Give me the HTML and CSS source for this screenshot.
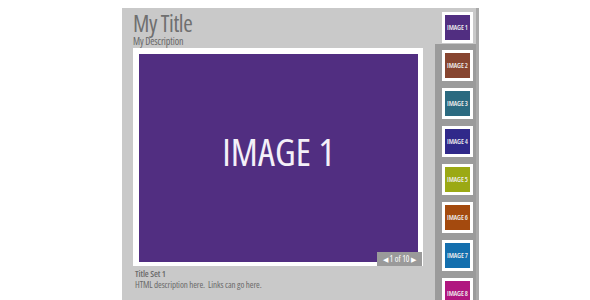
FILE: index.html
```html
<!doctype html>
<html lang="en">
	<head>
		<meta charset="UTF-8">
		<title>Gallery</title>
		<link rel="stylesheet" href="styles.css">
	</head>

	<body>
		<div class="gallery">
			<div class="main">
				<h1>My Title</h1>
				<p class="desc">My Description</p>

				<div class="frame">
					<div class="slide purple">IMAGE 1</div>
					<div class="counter"><span class="arrow">&#9664;</span> 1 of 10 <span class="arrow">&#9654;</span></div>
				</div>

				<div class="caption">
					<h3>Title Set 1</h3>
					<p>HTML description here.&nbsp; Links can go here.</p>
				</div>
			</div>

			<div class="thumbs">
				<div class="current">
					<div class="thumb purple">IMAGE 1</div>
				</div>
				<div class="strip">
					<div class="thumb brown">IMAGE 2</div>
					<div class="thumb teal">IMAGE 3</div>
					<div class="thumb indigo">IMAGE 4</div>
					<div class="thumb olive">IMAGE 5</div>
					<div class="thumb rust">IMAGE 6</div>
					<div class="thumb blue">IMAGE 7</div>
					<div class="thumb magenta">IMAGE 8</div>
				</div>
			</div>
		</div>
	</body>
</html>
```

FILE: styles.css
```css
* {
	padding: 0;
	margin: 0;
	box-sizing: border-box;
}
body {
	background-color: #fff;
	font-family: 'Open Sans', Arial, sans-serif;
	font-stretch: 80%;
	overflow: hidden;
}
.gallery {
	display: flex;
	width: 357px;
	height: 292px;
	margin: 8px 0 0 122px;
	background-color: #c9c9c9;
	border-right: 3px solid #a9a9a9;
}
.main {
	width: 313px;
	padding: 2px 0 0 11px;
}
h1 {
	font-size: 23px;
	font-weight: normal;
	line-height: 26px;
	letter-spacing: -0.4px;
	color: #6f6f6f;
}
.desc {
	font-size: 10px;
	line-height: 10px;
	letter-spacing: -0.1px;
	color: #666;
	margin-bottom: 2px;
}
.frame {
	position: relative;
	width: 290px;
	height: 218px;
	padding: 6px 5px 4px 6px;
	background-color: #fff;
}
.slide {
	display: flex;
	align-items: center;
	justify-content: center;
	width: 279px;
	height: 208px;
	padding-bottom: 14px;
	font-size: 38px;
	letter-spacing: 0.2px;
	color: #f4f0f8;
}
.counter {
	position: absolute;
	right: 1px;
	bottom: 0;
	width: 45px;
	height: 14px;
	background-color: #9a9a9a;
	color: #fff;
	font-size: 8.5px;
	line-height: 14px;
	text-align: center;
}
.arrow {
	font-size: 7px;
}
.caption {
	padding: 3px 0 0 2px;
	color: #6a6a6a;
	font-size: 9px;
	line-height: 11px;
	letter-spacing: -0.1px;
}
.caption h3 {
	font-size: 9px;
	font-weight: 600;
	line-height: 10px;
}
.thumbs {
	width: 41px;
}
.current {
	height: 36px;
	padding: 4px 3px 0 7px;
}
.strip {
	display: flex;
	flex-direction: column;
	gap: 7px;
	height: 260px;
	padding: 6px 3px 0 7px;
	background-color: #9b9b9b;
}
.thumb {
	display: flex;
	align-items: center;
	justify-content: center;
	flex-shrink: 0;
	width: 31px;
	height: 31px;
	border: 3px solid #fff;
	color: #eee;
	font-size: 7px;
	font-weight: 600;
	letter-spacing: -0.1px;
	white-space: nowrap;
	overflow: hidden;
}
.purple { background-color: #512e81; }
.brown { background-color: #874530; }
.teal { background-color: #2b6a80; }
.indigo { background-color: #30298a; }
.olive { background-color: #9ba914; }
.rust { background-color: #a44a0e; }
.blue { background-color: #146fae; }
.magenta { background-color: #b0177f; }
```
